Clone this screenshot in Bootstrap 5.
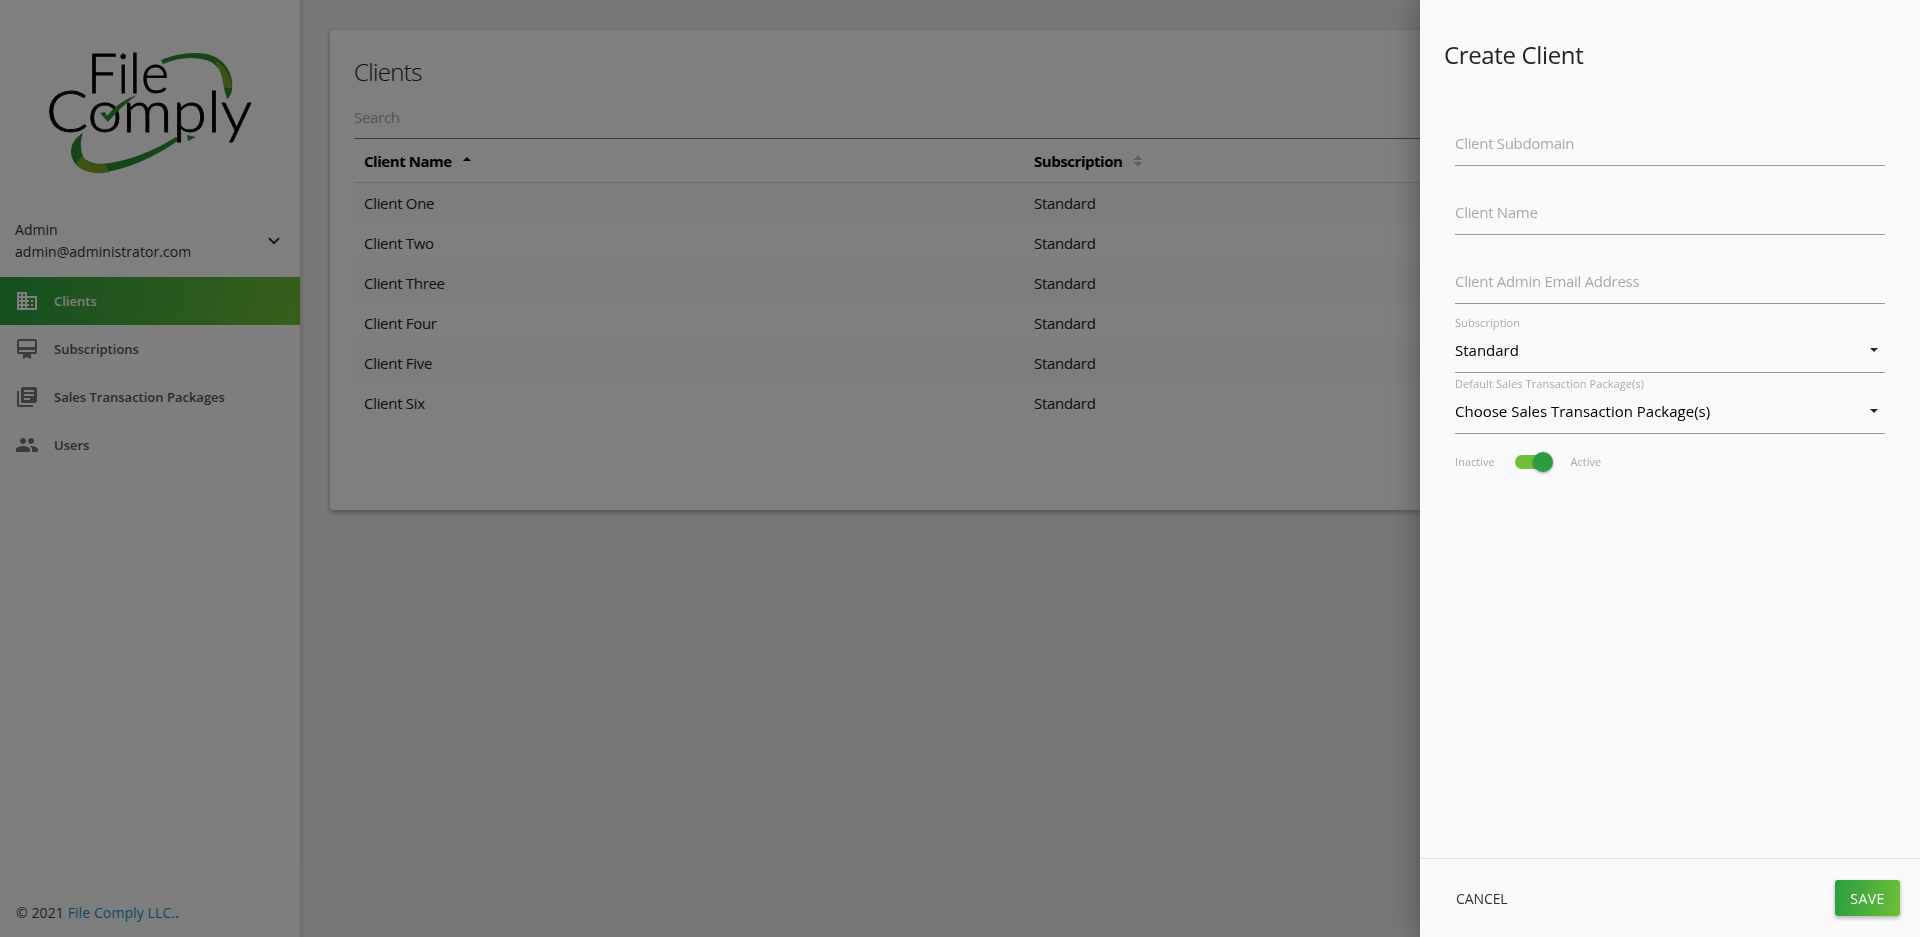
<!DOCTYPE html>
<html lang="en">
<head>
<meta charset="utf-8">
<title>Create Client</title>
<link href="https://cdn.jsdelivr.net/npm/bootstrap@5.3.0/dist/css/bootstrap.min.css" rel="stylesheet">
<style>
html,body{height:100%;}
body{font-family:"Open Sans","Noto Sans",sans-serif;font-size:14px;background:#eee;color:#212529;overflow:hidden;}
.app-shell{height:937px;}
.side-rail{width:300px;flex:0 0 300px;background:linear-gradient(180deg,#fff 0,#fbfbfb 100%);box-shadow:2px 0 4px rgba(0,0,0,.12);height:937px;}
.logo-box{height:205px;padding-left:46px;padding-top:30px;}
.logo-art{filter:blur(.35px);}
.logo-text{font-family:"Lato",sans-serif;font-weight:300;fill:#000;stroke:#000;stroke-width:.8;}
.user-box{height:72px;padding-left:15px;padding-right:20px;font-size:14px;line-height:22px;color:#333;letter-spacing:.05px;}
.rail-link{height:48px;padding-left:15px;gap:15px;color:#555;font-size:13px;font-weight:600;text-decoration:none;}
.rail-link svg{width:24px;height:24px;fill:#777;flex:none;}
.rail-link span{padding-top:1px;}
.rail-link.is-current{background:linear-gradient(100deg,#2a9d41,#6fbf37);color:#fff;}
.rail-link.is-current svg{fill:#fff;}
.rail-foot{padding-left:16px;padding-bottom:14px;font-size:14px;color:#444;letter-spacing:.1px;}
.rail-foot a{color:#1d8fc9;text-decoration:none;}
.work-area{padding:30px;min-width:0;}
.clients-box{height:480px;border:0;border-radius:3px;box-shadow:0 2px 5px rgba(0,0,0,.3);padding:25px 24px 0;}
.clients-title{font-size:24px;font-weight:300;line-height:34px;margin:0 0 10px;letter-spacing:-.65px;color:#222;}
.search-field{border:0;border-bottom:1px solid #777;border-radius:0;padding:0 0 4px;height:40px;font-size:15px;letter-spacing:-.3px;background:transparent;}
.search-field::placeholder{color:#aaa;}
.clients-table{table-layout:fixed;margin:0;font-size:15px;letter-spacing:-.3px;--bs-table-striped-bg:#fafafa;}
.clients-table th{height:43px;vertical-align:middle;font-weight:700;border-bottom:1px solid #ddd;padding:1px 10px 0;color:#000;letter-spacing:-.45px;}
.clients-table td{height:40px;vertical-align:middle;border:0;padding:2px 10px 0;color:#222;}
.name-col{width:670px;}
.sort-mark{display:inline-block;vertical-align:0;margin-left:10px;width:10px;height:12px;}
.offcanvas.create-panel{width:500px;--bs-offcanvas-width:500px;background:#fafafa;border:0;box-shadow:0 0 30px rgba(0,0,0,.35);visibility:visible;transform:none;}
.panel-title{font-size:24px;font-weight:400;line-height:34px;letter-spacing:-.35px;margin:0;color:#212529;}
.panel-head{padding:38px 24px 0;}
.panel-form{padding:49px 35px 0;}
.line-field{display:block;width:100%;height:45px;border:0;border-bottom:1px solid #999;border-radius:0;padding:0;background:transparent;font-size:15px;letter-spacing:-.3px;margin-bottom:24px;}
.line-field::placeholder{color:#aaa;}
.line-field:last-of-type{margin-bottom:12px;}
.mini-label{display:block;font-size:11px;line-height:14px;color:#aaa;letter-spacing:.08px;}
.select-line{width:100%;height:43px;border:0;border-bottom:1px solid #999;border-radius:0;padding:0 0 2px;font-size:15px;color:#000;background:transparent;margin-bottom:4px;}
.select-line::after{margin:0 7px 0 0;border-top-color:#222;}
.switch-row{height:56px;margin-top:-4px;font-size:11px;color:#aaa;}
.switch-track{position:relative;width:32px;height:14px;border-radius:7px;background:#6fbf37;margin:0 24px 0 20px;}
.switch-knob{position:absolute;right:-6px;top:-3px;width:20px;height:20px;border-radius:50%;background:#2a9d41;box-shadow:0 1px 3px rgba(0,0,0,.4);}
.panel-foot{height:79px;border-top:1px solid #e3e3e3;padding:0 20px 0 36px;}
.cancel-link{font-size:14px;color:#333;padding:0;border:0;letter-spacing:-.1px;}
.save-btn{width:65px;height:36px;padding:0;border:0;border-radius:3px;background:linear-gradient(100deg,#2a9d41,#6fbf37);color:#fff;font-size:14px;letter-spacing:.4px;box-shadow:0 2px 4px rgba(0,0,0,.3);}
.offcanvas-backdrop.show{opacity:.5;}
</style>
</head>
<body>
<div class="app-shell d-flex">
  <aside class="side-rail d-flex flex-column">
    <div class="logo-box">
      <svg class="logo-art" width="210" height="145" viewBox="46 30 210 145">
        <path d="M161 60C175 54 198 50 213 56C227 62 234 76 232 90C231 95 229 98 227 99L224 88C224 76 220 66 209 61C196 56 178 57 163 64Z" fill="#2f8a35"/>
        <path d="M214 60C224 64 231 76 232 88L224 88C222 76 220 68 214 60Z" fill="#7da52d"/>
        <path d="M83 133C71 140 68 152 74 162C81 172 96 175 116 170C140 164 162 152 179 140L176 137C155 150 131 160 110 163C98 165 89 163 84 158C80 151 80 141 83 133Z" fill="#2f8a35"/>
        <path d="M76 164C82 172 96 175 110 172L104 164C94 165 87 163 82 156Z" fill="#7da52d"/>
        <path d="M187 135L196 137L188 141Z" fill="#2f8a35"/>
        <text class="logo-text" x="87" y="93" font-size="56" textLength="82" lengthAdjust="spacingAndGlyphs">File</text>
        <text class="logo-text" x="46" y="132" font-size="58" textLength="206" lengthAdjust="spacingAndGlyphs">Comply</text>
        <path d="M100 113L105 112L107 116C115 106 125 99 137 95C127 102 117 111 108 122Z" fill="#2f8a35"/>
      </svg>
    </div>
    <div class="user-box d-flex justify-content-between align-items-center">
      <div><div>Admin</div><div>admin@administrator.com</div></div>
      <svg width="12" height="8" viewBox="0 0 12 8"><path d="M1 1.2L6 6.2L11 1.2" fill="none" stroke="#222" stroke-width="1.7"/></svg>
    </div>
    <nav class="d-flex flex-column">
      <a href="#" class="rail-link is-current d-flex align-items-center"><svg viewBox="0 0 24 24"><path d="M12 7V3H2v18h20V7H12zM6 19H4v-2h2v2zm0-4H4v-2h2v2zm0-4H4V9h2v2zm0-4H4V5h2v2zm4 12H8v-2h2v2zm0-4H8v-2h2v2zm0-4H8V9h2v2zm0-4H8V5h2v2zm10 12h-8v-2h2v-2h-2v-2h2v-2h-2V9h8v10zm-2-8h-2v2h2v-2zm0 4h-2v2h2v-2z"/></svg><span>Clients</span></a>
      <a href="#" class="rail-link d-flex align-items-center"><svg viewBox="0 0 24 24"><path d="M20 2H4c-1.11 0-2 .89-2 2v11c0 1.11.89 2 2 2h4v5l4-2 4 2v-5h4c1.11 0 2-.89 2-2V4c0-1.11-.89-2-2-2zm0 13H4v-2h16v2zm0-5H4V4h16v6z"/></svg><span>Subscriptions</span></a>
      <a href="#" class="rail-link d-flex align-items-center"><svg viewBox="0 0 24 24"><path d="M4 6H2v14c0 1.1.9 2 2 2h14v-2H4V6zm16-4H8c-1.1 0-2 .9-2 2v12c0 1.1.9 2 2 2h12c1.1 0 2-.9 2-2V4c0-1.1-.9-2-2-2zm-1 9H9V9h10v2zm-4 4H9v-2h6v2zm4-8H9V5h10v2z"/></svg><span>Sales Transaction Packages</span></a>
      <a href="#" class="rail-link d-flex align-items-center"><svg viewBox="0 0 24 24"><path d="M16 11c1.66 0 2.99-1.34 2.99-3S17.66 5 16 5c-1.66 0-3 1.34-3 3s1.34 3 3 3zm-8 0c1.66 0 2.99-1.34 2.99-3S9.66 5 8 5C6.34 5 5 6.34 5 8s1.34 3 3 3zm0 2c-2.33 0-7 1.17-7 3.5V19h14v-2.5c0-2.33-4.67-3.5-7-3.5zm8 0c-.29 0-.62.02-.97.05 1.16.84 1.97 1.97 1.97 3.45V19h6v-2.5c0-2.33-4.67-3.5-7-3.5z"/></svg><span>Users</span></a>
    </nav>
    <div class="rail-foot mt-auto">© 2021 <a href="#">File Comply LLC.</a>.</div>
  </aside>
  <main class="work-area flex-grow-1">
    <div class="card clients-box">
      <h2 class="clients-title">Clients</h2>
      <input class="form-control search-field shadow-none" type="text" placeholder="Search" aria-label="Search">
      <table class="table table-striped clients-table">
        <colgroup><col class="name-col"><col></colgroup>
        <thead>
          <tr>
            <th>Client Name<svg class="sort-mark" viewBox="0 0 10 12"><path d="M1 6L5 2L9 6Z" fill="#000"/></svg></th>
            <th>Subscription<svg class="sort-mark" viewBox="0 0 10 12"><path d="M.5 5L5 .5L9.5 5ZM.5 7L5 11.5L9.5 7Z" fill="#bbb"/></svg></th>
          </tr>
        </thead>
        <tbody>
          <tr><td>Client One</td><td>Standard</td></tr>
          <tr><td>Client Two</td><td>Standard</td></tr>
          <tr><td>Client Three</td><td>Standard</td></tr>
          <tr><td>Client Four</td><td>Standard</td></tr>
          <tr><td>Client Five</td><td>Standard</td></tr>
          <tr><td>Client Six</td><td>Standard</td></tr>
        </tbody>
      </table>
    </div>
  </main>
</div>
<div class="offcanvas-backdrop fade show"></div>
<div class="offcanvas offcanvas-end show create-panel d-flex flex-column" data-bs-backdrop="false" data-bs-scroll="true">
  <div class="panel-head"><h5 class="panel-title">Create Client</h5></div>
  <div class="panel-form flex-grow-1">
    <input class="line-field" type="text" placeholder="Client Subdomain" aria-label="Client Subdomain">
    <input class="line-field" type="text" placeholder="Client Name" aria-label="Client Name">
    <input class="line-field" type="text" placeholder="Client Admin Email Address" aria-label="Client Admin Email Address">
    <label class="mini-label">Subscription</label>
    <button type="button" class="btn dropdown-toggle select-line d-flex justify-content-between align-items-center">Standard</button>
    <label class="mini-label">Default Sales Transaction Package(s)</label>
    <button type="button" class="btn dropdown-toggle select-line d-flex justify-content-between align-items-center">Choose Sales Transaction Package(s)</button>
    <div class="switch-row d-flex align-items-center">
      <span>Inactive</span>
      <span class="switch-track"><span class="switch-knob"></span></span>
      <span>Active</span>
    </div>
  </div>
  <div class="panel-foot d-flex justify-content-between align-items-center">
    <button type="button" class="btn cancel-link">CANCEL</button>
    <button type="button" class="btn save-btn">SAVE</button>
  </div>
</div>
<script src="https://cdn.jsdelivr.net/npm/bootstrap@5.3.0/dist/js/bootstrap.bundle.min.js"></script>
</body>
</html>
